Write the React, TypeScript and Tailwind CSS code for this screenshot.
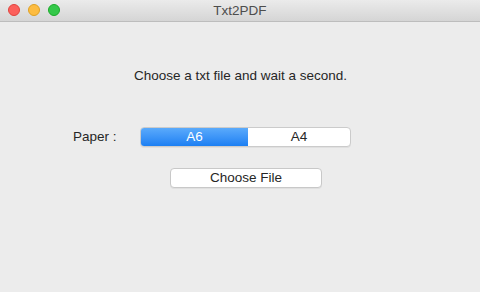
export default function App() {
  return (
    <div className="w-[480px] h-[292px] bg-[#ececec] flex flex-col overflow-hidden font-['Liberation_Sans',Arial,sans-serif] text-[13.5px] text-[#262626]">
      <div className="relative h-[22px] shrink-0 flex items-center justify-center bg-gradient-to-b from-[#ebebeb] to-[#d5d5d5] border-b border-[#bdbdbd]">
        <div className="absolute left-[8px] top-[4px] flex gap-[8px]">
          <span className="w-[12px] h-[12px] rounded-full bg-[#fc605c] border border-[#e0443e]" />
          <span className="w-[12px] h-[12px] rounded-full bg-[#fdbc40] border border-[#dea123]" />
          <span className="w-[12px] h-[12px] rounded-full bg-[#34c84a] border border-[#1aab29]" />
        </div>
        <span className="text-[13.5px] text-[#4d4d4d] leading-none">Txt2PDF</span>
      </div>

      <div className="flex flex-col pt-[46px]">
        <p className="text-center leading-[16px] pl-[1px]">Choose a txt file and wait a second.</p>

        <div className="flex items-center mt-[43px] h-[20px]">
          <span className="ml-[73px] w-[67px]">Paper :</span>
          <div className="flex w-[211px] h-[20px] rounded-[4px] border border-[#cbcbcb] bg-white overflow-hidden shadow-[0_1px_0_rgba(0,0,0,0.05)]">
            <div className="w-[107px] flex items-center justify-center text-white bg-gradient-to-b from-[#5aaafb] to-[#1a7ff3]">
              A6
            </div>
            <div className="flex-1 flex items-center justify-center">A4</div>
          </div>
        </div>

        <div className="mt-[21px] ml-[170px] w-[152px] h-[20px] rounded-[4px] border border-[#c8c8c8] bg-white flex items-center justify-center shadow-[0_1px_0_rgba(0,0,0,0.05)]">
          Choose File
        </div>
      </div>
    </div>
  );
}
